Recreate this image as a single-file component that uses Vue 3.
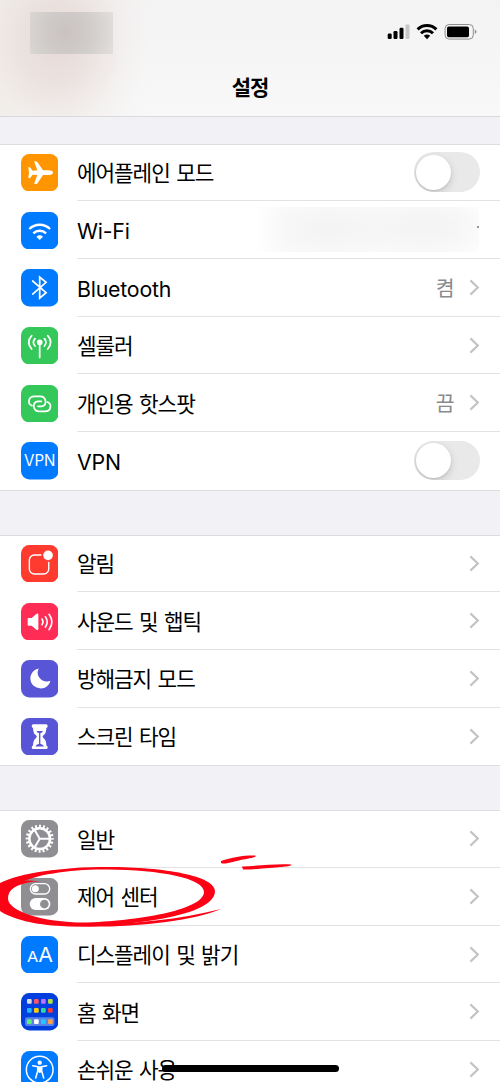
<script setup>
const groups = [
  [
    { icon: 'airplane', label: '에어플레인 모드', color: '#ff9500', toggle: true },
    { icon: 'wifi', label: 'Wi-Fi', color: '#007aff', masked: true },
    { icon: 'bluetooth', label: 'Bluetooth', color: '#007aff', value: '켬' },
    { icon: 'cellular', label: '셀룰러', color: '#34c759' },
    { icon: 'hotspot', label: '개인용 핫스팟', color: '#34c759', value: '끔' },
    { icon: 'vpn', label: 'VPN', color: '#007aff', toggle: true }
  ],
  [
    { icon: 'notification', label: '알림', color: '#ff3b30' },
    { icon: 'sound', label: '사운드 및 햅틱', color: '#ff2d55' },
    { icon: 'moon', label: '방해금지 모드', color: '#5856d6' },
    { icon: 'hourglass', label: '스크린 타임', color: '#5856d6' }
  ],
  [
    { icon: 'gear', label: '일반', color: '#8e8e93' },
    { icon: 'control', label: '제어 센터', color: '#8e8e93' },
    { icon: 'display', label: '디스플레이 및 밝기', color: '#007aff' },
    { icon: 'home', label: '홈 화면', color: '#003fdd' },
    { icon: 'access', label: '손쉬운 사용', color: '#007aff' }
  ]
];

const apps = [
  ['#d9dbe0', '#ff5263', '#bf70ff', '#b4e13c'],
  ['#1fb6ff', '#ffcc00', '#35d99b', '#ff3b30'],
  ['#5df07c', '#ffffff', '#22c8ff', '#ff9f3e']
];
const appRows = [18, 45, 79];

const isLatin = (text) => /^[A-Za-z-]+$/.test(text);
</script>

<template>
  <div class="phone">
    <header class="header">
      <div class="status">
        <div class="mask-time"></div>
        <svg class="status-icons" width="90" height="18" viewBox="0 0 90 18">
          <rect x="0.7" y="11.5" width="4" height="5.5" rx="1.2" />
          <rect x="6.5" y="9" width="4" height="8" rx="1.2" />
          <rect x="12.5" y="5.7" width="4" height="11.3" rx="1.2" />
          <rect x="18.5" y="2.4" width="4" height="14.6" rx="1.2" fill="#c6c6c6" />
          <g fill="none" stroke="#000" stroke-width="3">
            <path d="M30.6 7.4 A13.4 13.4 0 0 1 49.4 7.4" />
            <path d="M34 11.3 A8.6 8.6 0 0 1 46 11.3" />
          </g>
          <path d="M36.8 13.8 Q40 11.4 43.2 13.8 L40 17.2 Z" />
          <rect x="58.1" y="2.5" width="28.2" height="14.6" rx="4" fill="none" stroke="#8e8e8e" />
          <rect x="60" y="4.4" width="22" height="10.8" rx="1.8" />
          <path d="M87.8 7.6 Q89.5 8.3 89.5 9.8 Q89.5 11.3 87.8 12 Z" fill="#8e8e8e" />
        </svg>
      </div>
      <h1>설정</h1>
    </header>

    <section v-for="(rows, i) in groups" :key="i" class="group">
      <div v-for="row in rows" :key="row.icon" class="row">
        <svg class="icon" viewBox="0 0 112 112">
          <rect width="112" height="112" rx="25" :fill="row.color" />

          <path
            v-if="row.icon === 'airplane'"
            fill="#fff"
            d="M96 56 C96 51 88 49 82 49 L66 49 L49 24 Q47 22 44 22 L41 22 Q39 22 40 25 L49 49 L35 50 L28 41 Q27 39 24 39 Q22 39 22 42 L24 56 L22 70 Q22 73 24 73 Q27 73 28 71 L35 62 L49 63 L40 87 Q39 90 41 90 L44 90 Q47 90 49 88 L66 63 L82 63 C88 63 96 61 96 56 Z"
          />

          <g v-else-if="row.icon === 'wifi'" fill="none" stroke="#fff" stroke-width="7">
            <path d="M25 51 A44 44 0 0 1 87 51" />
            <path d="M37 64 A27 27 0 0 1 75 64" />
            <path d="M46 74 Q56 66 66 74 L56 84 Z" fill="#fff" stroke="none" />
          </g>

          <path
            v-else-if="row.icon === 'bluetooth'"
            class="line"
            stroke-width="5.2"
            stroke-linejoin="miter"
            d="M35 36 L75 71 L56 87 V24 L75 40 L35 75"
          />

          <g v-else-if="row.icon === 'cellular'" class="line" stroke-width="5.2">
            <circle cx="56" cy="46" r="6" fill="#fff" />
            <path d="M56 46 V91" />
            <path d="M42 35 Q32 46 42 57 M70 35 Q80 46 70 57" />
            <path d="M32 26 Q14 46 32 66 M80 26 Q98 46 80 66" />
          </g>

          <g v-else-if="row.icon === 'hotspot'" class="line" stroke-width="5.2">
            <path d="M33 62 C18 56 22 34 40 34 H57 C76 34 80 60 62 64 H51" />
            <path d="M79 51 C94 57 90 79 72 79 H55 C36 79 32 53 50 49 H61" />
          </g>

          <text v-else-if="row.icon === 'vpn'" x="9" y="73" font-size="48" textLength="94" lengthAdjust="spacingAndGlyphs">VPN</text>

          <g v-else-if="row.icon === 'notification'">
            <rect x="25" y="30" width="58" height="57" rx="15" class="line" stroke-width="4.2" />
            <circle cx="81" cy="31" r="20" :fill="row.color" />
            <circle cx="81" cy="31" r="14.5" fill="#fff" />
          </g>

          <g v-else-if="row.icon === 'sound'" class="line" stroke-width="4.8">
            <path d="M20 48 Q20 45 23 45 H32 L46 33 Q52 29 52 36 V77 Q52 84 46 80 L32 68 H23 Q20 68 20 65 Z" fill="#fff" stroke="none" />
            <path d="M63 48 Q69 56.5 63 65" />
            <path d="M73 41 Q84 56.5 73 72" />
            <path d="M84 34 Q101 56.5 84 80" />
          </g>

          <path
            v-else-if="row.icon === 'moon'"
            fill="#fff"
            d="M51 26 C54 25 53 28 51 31 C45 48 62 68 83 64 C87 63 89 62 87 66 C82 78 72 85 60 85 C41 85 28 72 28 55 C28 42 38 29 51 26 Z"
          />

          <g v-else-if="row.icon === 'hourglass'">
            <path fill="#fff" d="M37 19 H75 Q80 19 80 25 Q80 29 76 30 Q76 46 67 52 Q62 56 67 60 Q76 67 76 82 Q80 84 80 88 Q80 93 75 93 H37 Q32 93 32 88 Q32 84 36 82 Q36 67 45 60 Q50 56 45 52 Q36 46 36 30 Q32 29 32 25 Q32 19 37 19 Z" />
            <path :fill="row.color" d="M46 39 H66 Q63 44 58 46 V77 Q66 79 69 85 H43 Q46 79 54 77 V46 Q49 44 46 39 Z" />
          </g>

          <g v-else-if="row.icon === 'gear'" fill="none" stroke="#fff">
            <circle cx="56" cy="56" r="31" stroke-width="7.5" />
            <circle cx="56" cy="56" r="37.5" stroke-width="9" pathLength="200" stroke-dasharray="5 5" stroke-dashoffset="2.5" />
            <path stroke-width="6" d="M56 56 H86 M56 56 L41 30 M56 56 L41 82" />
          </g>

          <g v-else-if="row.icon === 'control'">
            <rect x="28" y="17" width="58" height="31" rx="15.5" class="line" stroke-width="4" />
            <circle cx="43" cy="32.5" r="10.5" fill="#fff" />
            <rect x="26" y="60" width="62" height="36" rx="18" fill="#fff" />
            <circle cx="70" cy="78" r="13" :fill="row.color" />
          </g>

          <g v-else-if="row.icon === 'display'">
            <text x="18" y="78" font-size="43" textLength="34" lengthAdjust="spacingAndGlyphs">A</text>
            <text x="52" y="78" font-size="62" textLength="44" lengthAdjust="spacingAndGlyphs">A</text>
          </g>

          <g v-else-if="row.icon === 'home'">
            <rect x="12" y="73" width="88" height="26" rx="6" fill="#fff" opacity="0.35" />
            <template v-for="(line, r) in apps" :key="r">
              <rect v-for="(fill, c) in line" :key="c" :x="18 + c * 21" :y="appRows[r]" width="14" height="14" rx="3" :fill="fill" />
            </template>
          </g>

          <g v-else class="line" stroke-width="4.4">
            <circle cx="56" cy="56" r="40" />
            <circle cx="56" cy="35" r="6.5" fill="#fff" stroke="none" />
            <path d="M35 44 L50 47 V60 L44 81 M77 44 L62 47 V60 L68 81" stroke-width="4.6" />
            <path d="M49 46 H63 V59 L58 66 H54 L49 59 Z" fill="#fff" stroke="none" />
          </g>
        </svg>

        <div class="content">
          <span class="label" :class="{ latin: isLatin(row.label) }">{{ row.label }}</span>
          <span v-if="row.toggle" class="toggle"></span>
          <span v-else-if="row.masked" class="mask-network"></span>
          <template v-else>
            <span v-if="row.value" class="value">{{ row.value }}</span>
            <svg class="chevron" width="11" height="17" viewBox="0 0 11 17">
              <path d="M1.4 1.4 L8.8 8.5 L1.4 15.6" fill="none" stroke="#c4c4c7" stroke-width="2.2" />
            </svg>
          </template>
        </div>
      </div>
    </section>

    <div class="home-bar"></div>

    <!-- hand drawn marker around the control center row -->
    <svg class="marker" width="300" height="90" viewBox="0 850 300 90">
      <path
        fill-rule="evenodd"
        d="M0 883 C20 873 62 867 108 867 C165 867 215 876 215 891 C215 907 182 916 148 921 C120 925 92 927 62 926 C35 925 12 919 0 911 Z M8 899 C9 911 42 923 88 922.5 C145 920 204 909 204 892 C204 878 160 870 108 869.5 C70 869 34 875 20 883 C12 887 8 891 8 899 Z"
      />
      <path d="M8 895 C12 885 26 882 41 881 C28 881 20 879 12 883 L2 890 Z" />
      <path d="M60 924 C115 926 175 921 221 909 C190 922 125 929 60 926 Z" />
      <path d="M221 861 C232 857 246 855 255 855.5 C258 857 250 858 243 859.5 C235 861 225 865 221 863 Z" />
      <path d="M242 866.5 C258 866 276 863.5 291 864.5 C294 866.5 278 867 270 868 C260 868.5 249 870 243 869.5 Z" />
    </svg>
  </div>
</template>

<style>
body {
  margin: 0;
  overflow: hidden;
}
</style>

<style scoped>
.phone {
  position: relative;
  width: 500px;
  height: 1082px;
  overflow: hidden;
  background: #f2f1f6;
  color: #000;
  font-family: Inter, "Noto Sans CJK KR", sans-serif;
}
.header {
  box-sizing: border-box;
  height: 117px;
  border-bottom: 1px solid #d9d9dc;
  background:
    radial-gradient(ellipse 90px 110px at 58px 42px, rgba(226, 211, 209, .8), rgba(229, 215, 213, .55) 40%, rgba(236, 228, 226, .2) 75%, rgba(240, 236, 234, 0)),
    linear-gradient(90deg, rgba(240, 235, 230, .7), rgba(244, 244, 244, 0) 150px),
    linear-gradient(#f3f3f3, #f8f8f8);
}
.status {
  display: flex;
  justify-content: space-between;
  height: 54px;
  padding: 12px 23px 0 30px;
  box-sizing: border-box;
}
.mask-time {
  width: 83px;
  height: 42px;
  background: radial-gradient(ellipse 56px 64px at 36px 20px, #c9c2c1, #d1cdcb 45%, rgba(226, 223, 221, .75));
}
.status-icons {
  margin-top: 10px;
}
h1 {
  margin: 19px 0 0;
  font-size: 21px;
  line-height: 30px;
  font-weight: 600;
  letter-spacing: -1px;
  text-align: center;
}
.group {
  margin: 26.8px 0 45px;
  box-shadow: inset 0 1px #dddde0, 0 1px #dddde0;
  background: #fff;
}
.group + .group {
  margin-top: 0;
}
.row {
  display: flex;
  align-items: center;
  height: 57.67px;
  padding-left: 20.5px;
}
.icon {
  flex: none;
  width: 37.4px;
  height: 37.4px;
}
.icon text {
  fill: #fff;
  font-family: Inter, sans-serif;
}
.line {
  fill: none;
  stroke: #fff;
  stroke-linecap: round;
}
.content {
  display: flex;
  flex: 1;
  align-items: center;
  height: 100%;
  margin-left: 19.1px;
  padding-right: 20.5px;
  box-sizing: border-box;
  border-bottom: 1px solid #e2e2e4;
}
.row:last-child .content {
  border-bottom-color: transparent;
}
.label {
  flex: 1;
  padding-top: 2px;
  font-size: 21.3px;
  line-height: 30px;
  letter-spacing: -1.05px;
  word-spacing: 1.5px;
  white-space: nowrap;
}
.latin {
  padding-top: 3px;
  letter-spacing: -.2px;
}
.value {
  margin-right: 14px;
  padding-top: 2.5px;
  color: #8a8a8e;
  font-size: 20.5px;
  line-height: 30px;
}
.chevron {
  flex: none;
}
.toggle {
  width: 65.5px;
  height: 39.5px;
  border-radius: 20px;
  background: #e9e9ea;
  overflow: hidden;
}
.toggle::before {
  content: "";
  display: block;
  width: 35px;
  height: 35px;
  margin: 2.3px;
  border-radius: 50%;
  background: #fff;
  box-shadow: 0 3px 8px rgba(0, 0, 0, .15), 0 1px 2px rgba(0, 0, 0, .1);
}
.mask-network {
  width: 225px;
  height: 45px;
  margin-right: 1px;
  background:
    radial-gradient(circle at 224px 20px, #999 0 .8px, transparent 1.3px),
    radial-gradient(ellipse 70px 34px at 75px 22px, #f3f3f3, rgba(250, 250, 250, 0)),
    radial-gradient(ellipse 80px 34px at 170px 20px, #f3f3f3, rgba(250, 250, 250, 0)),
    linear-gradient(90deg, #fff, #fafafa 30px 190px, #fdfdfd);
}
.home-bar {
  position: absolute;
  left: 162px;
  bottom: 10.5px;
  width: 177px;
  height: 6.5px;
  border-radius: 4px;
  background: #000;
}
.marker {
  position: absolute;
  left: 0;
  top: 850px;
  fill: #fb0214;
}
</style>
